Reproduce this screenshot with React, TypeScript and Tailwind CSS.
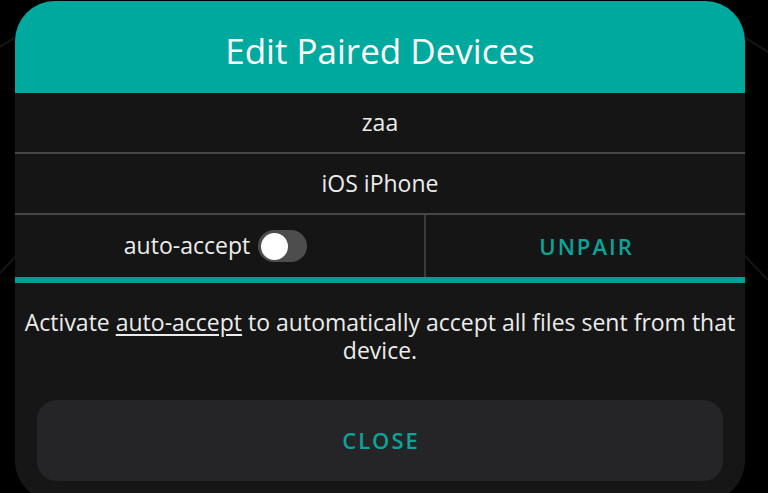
import React from "react";

export default function App() {
  const font = { fontFamily: '"Open Sans", "Noto Sans", sans-serif' };
  return (
    <div className="relative w-[768px] h-[493px] bg-black overflow-hidden" style={font}>
      <svg className="absolute inset-0" width="768" height="493" viewBox="0 0 768 493">
        <line x1="0" y1="47" x2="16" y2="37" stroke="#161616" strokeWidth="2" />
        <line x1="744" y1="37" x2="768" y2="52" stroke="#161616" strokeWidth="2" />
        <line x1="0" y1="273" x2="16" y2="256" stroke="#161616" strokeWidth="2" />
        <line x1="744" y1="255" x2="768" y2="280" stroke="#161616" strokeWidth="2" />
      </svg>
      <div className="relative pt-[1px] pl-[15px]">
        <div className="w-[730px] h-[500px] rounded-[40px] bg-[#161616] overflow-hidden flex flex-col">
          <div className="h-[92px] bg-[#00a99d] flex items-center justify-center">
            <span className="text-white text-[35px] leading-none pt-[6px]">Edit Paired Devices</span>
          </div>
          <div className="h-[61px] border-b-2 border-[#474747] bg-[#151515] flex items-center justify-center text-[23px] text-[#ececec]">
            zaa
          </div>
          <div className="h-[61px] border-b-2 border-[#474747] bg-[#151515] flex items-center justify-center text-[23px] text-[#ececec]">
            iOS iPhone
          </div>
          <div className="h-[62px] flex bg-[#151515]">
            <div className="w-[411px] border-r-2 border-[#3a3a3a] flex items-center justify-center gap-[8px] pr-[8px]">
              <span className="text-[23px] text-[#ececec] pb-[1px]">auto-accept</span>
              <div className="w-[49px] h-[32px] rounded-full bg-[#4d4d4d] flex items-center pl-[3px]">
                <div className="w-[27px] h-[27px] rounded-full bg-white" />
              </div>
            </div>
            <div className="flex-1 flex items-center justify-center">
              <span className="text-[22px] font-semibold tracking-[2px] text-[#0aa498] pl-[2px]">UNPAIR</span>
            </div>
          </div>
          <div className="h-[6px] bg-[#00a094]" />
          <p className="pt-[25px] px-[6px] text-center text-[23px] leading-[28px] text-[#ececec]">
            Activate <span className="underline underline-offset-[3px]">auto-accept</span> to automatically accept all files sent from that device.
          </p>
          <div className="mt-[36px] mx-[22px] h-[81px] rounded-[20px] bg-[#252527] flex items-center justify-center">
            <span className="text-[22px] font-semibold tracking-[2px] text-[#0aa498] pl-[2px]">CLOSE</span>
          </div>
        </div>
      </div>
    </div>
  );
}
